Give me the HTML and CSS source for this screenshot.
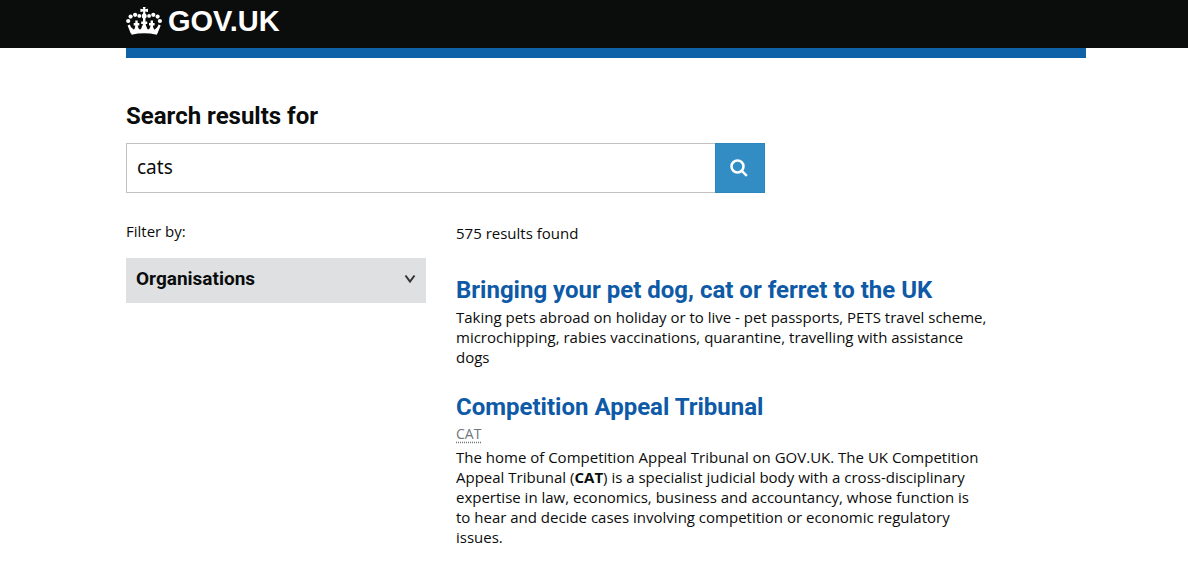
FILE: index.html
```html
<!DOCTYPE html>
<html lang="en">
<head>
<meta charset="utf-8">
<title>cats - Search - GOV.UK</title>
<link rel="stylesheet" href="styles.css">
</head>
<body>
<header class="header">
  <div class="container">
    <a class="logo" href="#">
      <svg class="crown" viewBox="0 0 36 28" aria-hidden="true">
        <g fill="currentColor">
          <path d="M16.800 0h2.800l-.5 2.300 2.900-.6v3.300l-2.900-.6.6 3.800h-3l.6-3.800-2.900.6V1.700l2.900.6z"/>
          <circle cx="18.200" cy="9" r="2.500"/>
          <circle cx="13.300" cy="8.900" r="1.900"/><circle cx="23.100" cy="8.900" r="1.900"/>
          <circle cx="9.100" cy="7.800" r="2.100"/><circle cx="27.300" cy="7.800" r="2.100"/>
          <circle cx="4.600" cy="9.600" r="2.100"/><circle cx="31.600" cy="9.600" r="2.100"/>
          <circle cx="2.200" cy="14" r="2.100"/><circle cx="33.900" cy="14" r="2.100"/>
          <path d="M4.300 23.500Q18 20.500 32.100 23.500l-1.300 4.200Q18 24.800 5.600 27.700z"/>
          <path d="M2.700 18l3.200 8M33.600 18l-3.300 8M10.500 13.500v10M25.800 13.500v10M18.200 11v12.500M7.700 17.300h5.600M23 17.300h5.600M15.200 15.800h6" fill="none" stroke="currentColor" stroke-width="2.400"/>
          <path d="M3.500 19l5.500 4.500-3 2zM10.500 17l3.500 7H7.500zM18.200 14l4 10H14.200zM25.800 17l3 7h-6.500zM32.900 19l-5.500 4.500 3 2z"/>
        </g>
      </svg>
      <span>GOV.UK</span>
    </a>
  </div>
</header>
<main class="container main">
  <form class="search">
    <label class="search-label" for="q">Search results for</label>
    <div class="search-row">
      <input class="search-input" id="q" type="text" value="cats">
      <button class="search-button" type="button" aria-label="Search">
        <svg class="search-icon" viewBox="0 0 18 18" aria-hidden="true"><circle cx="7.500" cy="7.500" r="6"/><path d="M11.800 11.800l5 5"/></svg>
      </button>
    </div>
  </form>
  <div class="columns">
    <aside class="filters">
      <p class="filter-title">Filter by:</p>
      <button class="facet" type="button">
        <span>Organisations</span>
        <svg class="chevron" viewBox="0 0 12 10" aria-hidden="true"><path d="M1.500 1.500L6 7.500l4.500-6"/></svg>
      </button>
    </aside>
    <section class="results">
      <p class="count">575 results found</p>
      <article class="result">
        <h3 class="result-title"><a href="#">Bringing your pet dog, cat or ferret to the UK</a></h3>
        <p class="text">Taking pets abroad on holiday or to live - pet passports, PETS travel scheme, microchipping, rabies vaccinations, quarantine, travelling with assistance dogs</p>
      </article>
      <article class="result">
        <h3 class="result-title"><a href="#">Competition Appeal Tribunal</a></h3>
        <p class="meta"><abbr>CAT</abbr></p>
        <p class="text">The home of Competition Appeal Tribunal on GOV.UK. The UK Competition Appeal Tribunal (<strong>CAT</strong>) is a specialist judicial body with a cross-disciplinary expertise in law, economics, business and accountancy, whose function is to&nbsp;hear and decide cases involving competition or economic regulatory issues.</p>
      </article>
    </section>
  </div>
</main>
</body>
</html>
```
FILE: styles.css
```css
* { box-sizing: border-box; }
body { margin: 0; background: #fff; color: #0b0c0c; font: 15px/20px "Open Sans", sans-serif; }
p, h3 { margin: 0; }
.container { max-width: 960px; margin: 0 auto; position: relative; left: 12px; }
.header { background: #0b0c0c; height: 48px; }
.logo { display: flex; align-items: center; gap: 6px; height: 42px; color: #fff; text-decoration: none; font: bold 29px/42px "Liberation Sans", sans-serif; }
.crown { width: 36px; height: 28px; }
.main { border-top: 10px solid #1062a8; padding-top: 43px; }
.search-label { display: block; font: 700 24px/30px Roboto, sans-serif; }
.search { width: 639px; max-width: 100%; }
.search-row { display: flex; margin-top: 12px; }
.search-input { flex: 1; min-width: 0; height: 50px; padding: 0 10px 2px; border: 1px solid #bfc1c3; border-right: 0; font: 19px "Noto Sans", sans-serif; color: #0b0c0c; }
.search-button { display: grid; place-items: center; width: 50px; height: 50px; padding: 0 2px 0 0; border: 1px solid #2b86bf; background: #328dc4; }
.search-icon { width: 18px; height: 18px; fill: none; stroke: #fff; stroke-width: 2.500; }
.columns { display: grid; grid-template-columns: 300px 1fr; gap: 30px; padding-top: 28px; }
.filter-title { margin-bottom: 17px; }
.facet { display: flex; justify-content: space-between; align-items: center; width: 100%; height: 45px; padding: 0 10px 4px; border: 0; background: #dee0e2; font: 700 19px Roboto, sans-serif; color: #0b0c0c; }
.chevron { width: 12px; height: 10px; fill: none; stroke: #333; stroke-width: 2; }
.results { max-width: 540px; padding-top: 2px; }
.count { margin-bottom: 30px; }
.result { margin-bottom: 23px; }
.result-title { font: 700 24px/34px Roboto, sans-serif; white-space: nowrap; }
.result-title a { color: #0e5aa7; text-decoration: none; }
.meta { font-size: 14px; line-height: 20px; color: #6f777b; margin: 0 0 3px; }
.meta abbr { text-decoration: underline dotted; text-underline-offset: 3px; }
```
